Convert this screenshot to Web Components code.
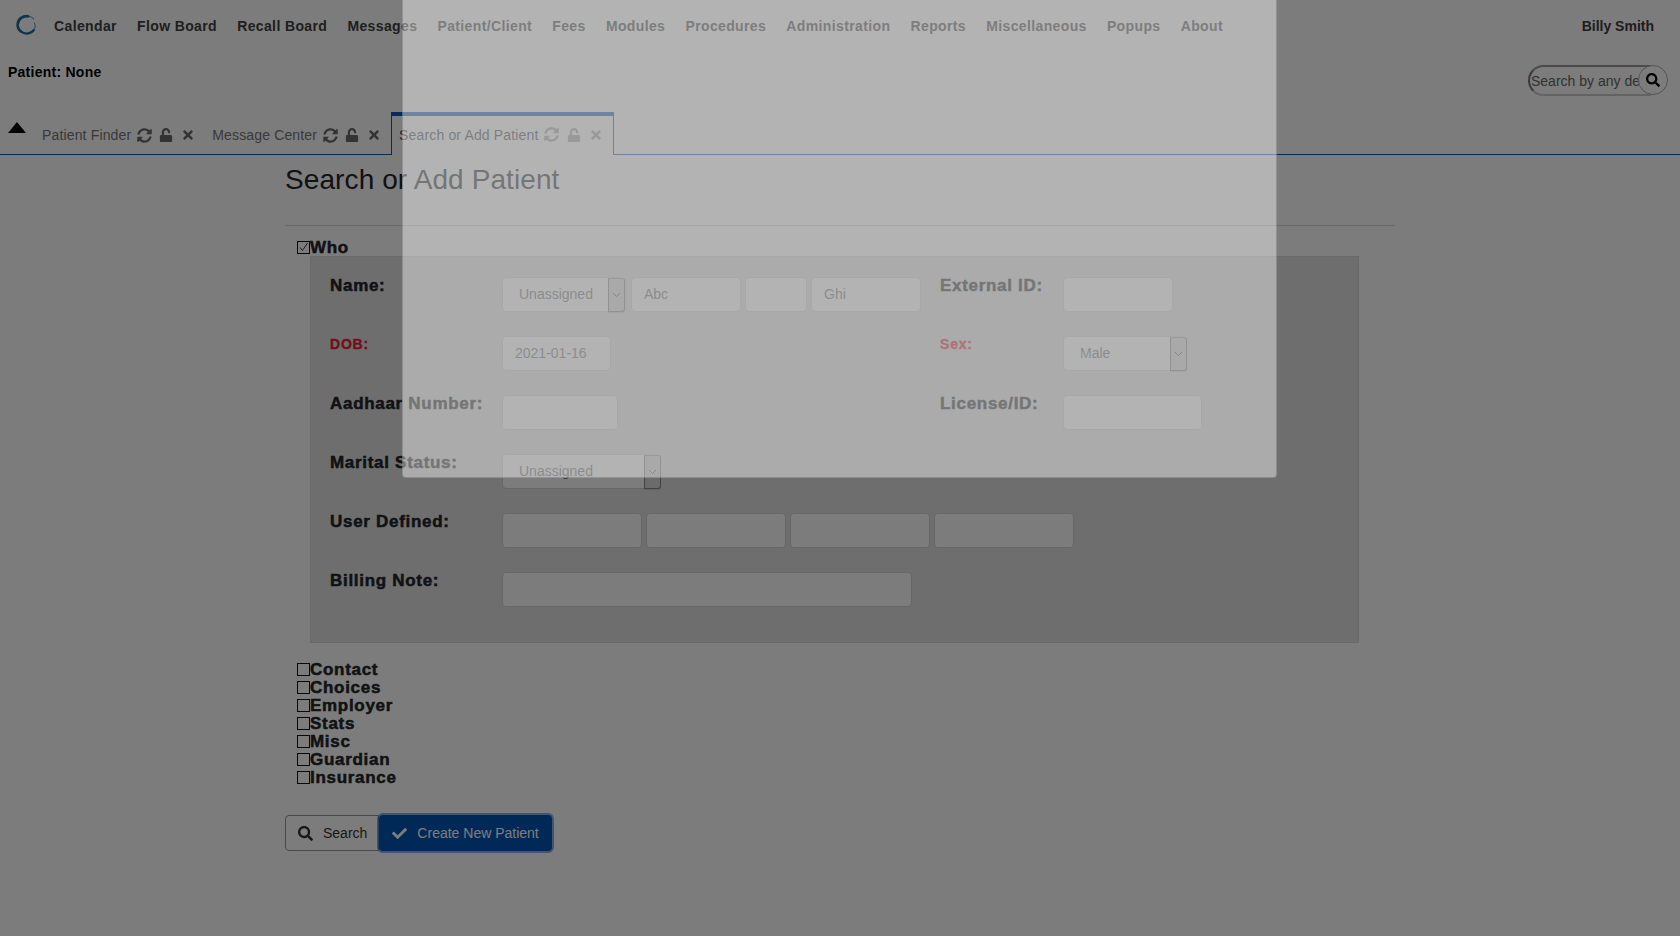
<!DOCTYPE html>
<html lang="en"><head><meta charset="utf-8"><title>Search or Add Patient</title>
<style>
html,body{margin:0;height:936px;overflow:hidden;background:#fff;font-family:"Liberation Sans",Arial,sans-serif;}
</style></head><body>
<x-app></x-app>
<script>
const P={
search:['0 0 512 512','M505 442.7L405.3 343c-4.5-4.5-10.6-7-17-7H372c27.6-35.3 44-79.7 44-128C416 93.1 322.9 0 208 0S0 93.1 0 208s93.1 208 208 208c48.3 0 92.7-16.4 128-44v16.3c0 6.4 2.5 12.5 7 17l99.7 99.7c9.4 9.4 24.6 9.4 33.9 0l28.3-28.3c9.4-9.4 9.4-24.6.1-34zM208 336c-70.7 0-128-57.2-128-128 0-70.7 57.2-128 128-128 70.7 0 128 57.2 128 128 0 70.7-57.2 128-128 128z'],
check:['0 0 512 512','M173.898 439.404l-166.4-166.4c-9.997-9.997-9.997-26.206 0-36.204l36.203-36.204c9.997-9.998 26.207-9.998 36.204 0L192 312.69 432.095 72.596c9.997-9.997 26.207-9.997 36.204 0l36.203 36.204c9.997 9.997 9.997 26.206 0 36.204l-294.4 294.401c-9.998 9.997-26.207 9.997-36.204-.001z'],
times:['0 0 352 512','M242.72 256l100.07-100.07c12.28-12.28 12.28-32.19 0-44.48l-22.24-22.24c-12.28-12.28-32.19-12.28-44.48 0L176 189.28 75.93 89.21c-12.28-12.28-32.19-12.28-44.48 0L9.21 111.45c-12.28 12.28-12.28 32.19 0 44.48L109.28 256 9.21 356.07c-12.28 12.28-12.28 32.19 0 44.48l22.24 22.24c12.28 12.28 32.2 12.28 44.48 0L176 322.72l100.07 100.07c12.28 12.28 32.2 12.28 44.48 0l22.24-22.24c12.28-12.28 12.28-32.19 0-44.48L242.72 256z'],
unlock:['0 0 448 512','M400 256H152V152.9c0-39.6 31.7-72.5 71.3-72.9 40-.4 72.7 32.1 72.7 72v16c0 13.3 10.7 24 24 24h32c13.3 0 24-10.7 24-24v-16C376 68 307.5-.3 223.5 0 139.5.3 72 69.5 72 153.5V256H48c-26.5 0-48 21.5-48 48v160c0 26.5 21.5 48 48 48h352c26.5 0 48-21.5 48-48V304c0-26.5-21.5-48-48-48z'],
sync:['0 0 512 512','M370.72 133.28C339.458 104.008 298.888 87.962 255.848 88c-77.458.068-144.328 53.178-162.791 126.85-1.344 5.363-6.122 9.15-11.651 9.15H24.103c-7.498 0-13.194-6.807-11.807-14.176C33.933 94.924 134.813 8 256 8c66.448 0 126.791 26.136 171.315 68.685L463.03 40.97C478.149 25.851 504 36.559 504 57.941V192c0 13.255-10.745 24-24 24H345.941c-21.382 0-32.09-25.851-16.971-40.971l41.75-41.749zM32 296h134.059c21.382 0 32.09 25.851 16.971 40.971l-41.75 41.75c31.262 29.273 71.835 45.319 114.876 45.28 77.418-.07 144.315-53.144 162.787-126.849 1.344-5.363 6.122-9.15 11.651-9.15h57.304c7.498 0 13.194 6.807 11.807 14.176C478.067 417.076 377.187 504 256 504c-66.448 0-126.791-26.136-171.315-68.685L48.97 471.03C33.851 486.149 8 475.441 8 454.059V320c0-13.255 10.745-24 24-24z']};
const ico=(n,s)=>`<svg width="${s}" height="${s}" viewBox="${P[n][0]}" fill="currentColor" aria-hidden="true"><path d="${P[n][1]}"/></svg>`;
function def(name,css,html){customElements.define(name,class extends HTMLElement{
  constructor(){super();this.attachShadow({mode:'open'});}
  connectedCallback(){this.shadowRoot.innerHTML=`<style>${css}</style>`+(typeof html==='function'?html(this):html);}
});}

def('x-nav',`:host{display:flex;height:52px;align-items:center;padding:0 26px 0 15px;font-size:14px;font-weight:700;letter-spacing:.37px;color:#404040}
svg{display:block;margin-right:17px;margin-top:-2px}
.items{display:flex;gap:20.2px;flex:1}
.items span{white-space:nowrap}
.u{color:#3c3c3c;letter-spacing:0}`,()=>`<svg width="22" height="22" viewBox="0 0 22 22" fill="none"><path d="M19 5.2A9 9 0 0 0 14 2.3" stroke="#2f86b5" stroke-width="1"/><path d="M14 2.4C8 1 2.8 5 2.6 10.6 2.5 13.5 3.8 16 6 17.6" stroke="#1f6f9e" stroke-width="2.6"/><path d="M5.5 17.2c3.6 3 8.3 2.7 11.2.8 1.2-.8 2-1.6 2.6-2.6" stroke="#1c6a98" stroke-width="2.4"/><path d="M19.3 15.4c1.1-2.1 1.1-4.7 0-6.7" stroke="#3a8fc0" stroke-width="1"/></svg>
<div class="items">${['Calendar','Flow Board','Recall Board','Messages','Patient/Client','Fees','Modules','Procedures','Administration','Reports','Miscellaneous','Popups','About'].map(t=>`<span>${t}</span>`).join('')}</div><span class="u">Billy Smith</span>`);

def('x-patient-bar',`:host{display:flex;height:60px;justify-content:space-between;align-items:flex-start;padding:0 12px 0 8px}
.p{font-size:14px;font-weight:700;color:#000;margin-top:12px;line-height:16px;letter-spacing:.25px}
.s{display:flex;margin-top:13px;align-items:center;position:relative;width:140px}
.box{width:120px;height:27px;border:2px solid #aaa;border-right:0;border-color:#999 #ccc #ccc #777;border-radius:16px 0 0 16px;overflow:hidden;white-space:nowrap;font-size:14px;line-height:29px;color:#666;padding-left:1px;background:#fff}
.b{position:absolute;left:110px;top:0;width:28px;height:28px;border:1px solid #aaa;border-radius:50%;background:#fff;display:flex;align-items:center;justify-content:center;color:#000}`,
`<div class="p">Patient: None</div><div class="s"><div class="box">Search by any demographics</div><div class="b">${ico('search',14)}</div></div>`);

def('x-tab',`:host{display:flex;align-items:center;gap:8px;padding:0 9px;height:36px;font-size:14px;letter-spacing:.15px;color:#767676;margin:5px -1px 0 0;box-sizing:border-box}
:host([active]){border:1px solid #0a5cb8;border-top-width:4px;border-bottom:0;background:#fff;height:43px;margin:0 0 -1px 2px;padding:0 10px 2px 7px;position:relative;color:#3c4248}
.t{margin-right:-2px;white-space:nowrap}:host([active]) .t{margin-right:-1.5px}
.i{width:14px;display:flex;justify-content:center;color:#6a6a6a}:host([active]) .i{color:#a2a2a2}svg{display:block;flex:none}`,
h=>`<span class="t">${h.getAttribute('label')}</span><span class="i">${ico('sync',15)}</span><span class="i">${ico('unlock',14)}</span><span class="i">${ico('times',14)}</span>`);

def('x-tabs',`:host{display:flex;border-bottom:1px solid #0a5cb8;height:42px;padding-left:8px}
.tri{width:0;height:0;border:9.5px solid transparent;border-top:0;border-bottom:11px solid #000;margin:10px 7px 0 0}`,
`<div class="tri"></div><slot></slot>`);

def('x-field',`:host{display:block;box-sizing:border-box;height:35px;background:#fff;border:1px solid #d0d3d8;border-radius:4px;font-size:14px;line-height:33px;color:#6c757d;padding-left:12px;white-space:nowrap;overflow:hidden}`,`<slot></slot>`);

def('x-select',`:host{display:flex;box-sizing:border-box;height:35px;background:#fff;border:1px solid #d0d3d8;border-radius:4px;font-size:14px;line-height:33px;color:#6c757d}
.v{flex:1;padding-left:16px;white-space:nowrap;overflow:hidden}
.a{width:15px;flex:none;background:#dcdcdc;border:1px solid #8a8a8a;border-top-color:#aaa;border-radius:0 3px 3px 0;display:flex;align-items:center;justify-content:center;margin:0 -1px -1px 0;box-shadow:0 1px 1px rgba(0,0,0,.12)}`,
`<div class="v"><slot></slot></div><div class="a"><svg width="9" height="6" viewBox="0 0 9 6" fill="none"><path d="M1 1l3.5 3.5L8 1" stroke="#666" stroke-width="1"/></svg></div>`);

def('x-check',`:host{display:flex;align-items:center;height:18px;font-size:17px;line-height:18px;font-weight:700;letter-spacing:.7px;-webkit-text-stroke:.5px currentColor;color:#212529;white-space:nowrap}
.c{width:11px;height:11px;border:1px solid #111;flex:none;margin-top:-2px;display:flex;-webkit-text-stroke:0}svg{display:block}`,
h=>`<span class="c">${h.hasAttribute('checked')?'<svg width="11" height="11" viewBox="0 0 11 11" fill="none"><path d="M2 5.5l2.5 3L9.5 1" stroke="#444" stroke-width="1"/></svg>':''}</span><slot></slot>`);

def('x-label',`:host{display:block;font-size:17px;font-weight:700;letter-spacing:.7px;-webkit-text-stroke:.5px currentColor;color:#212529;line-height:18px;white-space:nowrap}
:host([req]){color:#ee1c34;font-size:14px;letter-spacing:.8px;-webkit-text-stroke:.4px currentColor;margin-top:-1px}`,`<slot></slot>`);

def('x-form',`:host{display:block;box-sizing:border-box;width:1049px;height:387px;background:#e2e3e5;border:1px solid #d6d8db;padding:20px 0 0 19px;margin-left:25px}
.g{display:grid;grid-template-columns:172px 438px 123px;grid-auto-rows:35px;row-gap:24px}
.r{display:flex}`,`<div class="g">
<x-label>Name:</x-label><div class="r"><x-select style="width:123px">Unassigned</x-select><x-field style="width:110px;margin-left:6px">Abc</x-field><x-field style="width:62px;margin-left:4px"></x-field><x-field style="width:110px;margin-left:4px">Ghi</x-field></div><x-label>External ID:</x-label><x-field style="width:110px"></x-field>
<x-label req>DOB:</x-label><div class="r"><x-field style="width:109px">2021-01-16</x-field></div><x-label req>Sex:</x-label><x-select style="width:124px">Male</x-select>
<x-label>Aadhaar Number:</x-label><div class="r"><x-field style="width:116px"></x-field></div><x-label>License/ID:</x-label><x-field style="width:139px"></x-field>
<x-label>Marital Status:</x-label><div class="r"><x-select style="width:159px">Unassigned</x-select></div><span></span><span></span>
<x-label>User Defined:</x-label><div class="r" style="gap:4px;grid-column:2/5"><x-field style="width:140px"></x-field><x-field style="width:140px"></x-field><x-field style="width:140px"></x-field><x-field style="width:140px"></x-field></div>
<x-label>Billing Note:</x-label><div class="r" style="grid-column:2/5"><x-field style="width:410px"></x-field></div>
</div>`);

def('x-btn',`:host{display:flex;align-items:center;box-sizing:border-box;height:36px;font-size:14px;gap:10px;padding:0 11px 0 12px;border:1px solid #999;border-radius:4px 0 0 4px;color:#333;background:#fff}
:host([primary]){background:#0056b3;border:0;border-radius:4px;color:#fff;box-shadow:0 0 0 2px rgba(38,110,190,.55);padding:0 13px 0 13px;margin-left:0;position:relative}svg{display:block}`,h=>`${ico(h.getAttribute('icon'),15)}<slot></slot>`);

def('x-page',`:host{display:block;padding-left:285px;width:1110px}
h2{font-size:28px;font-weight:400;margin:0;line-height:34px;padding-top:8px;color:#212529;letter-spacing:.1px}
hr{border:0;border-top:1px solid #d8d8d8;margin:28px 0 13px}
.list{margin:18px 0 0 12px}.who{margin:0 0 -1px 12px}
.btns{display:flex;margin-top:28px}`,`<h2>Search or Add Patient</h2><hr>
<x-check checked class="who">Who</x-check><x-form></x-form>
<div class="list"><x-check>Contact</x-check><x-check>Choices</x-check><x-check>Employer</x-check><x-check>Stats</x-check><x-check>Misc</x-check><x-check>Guardian</x-check><x-check>Insurance</x-check></div>
<div class="btns"><x-btn icon="search">Search</x-btn><x-btn icon="check" primary>Create New Patient</x-btn></div>`);

def('x-overlay',`:host{position:fixed;inset:0;background:rgba(0,0,0,.514);display:block}
.m{position:absolute;left:402px;top:0;width:875px;height:478px;box-sizing:border-box;background:rgba(255,255,255,.42);border:1px solid rgba(0,0,0,.18);border-top:0;border-radius:0 0 4px 4px}`,`<div class="m"></div>`);

def('x-app',`:host{display:block;height:936px;position:relative;overflow:hidden}`,`<x-nav></x-nav><x-patient-bar></x-patient-bar>
<x-tabs><x-tab label="Patient Finder"></x-tab><x-tab label="Message Center"></x-tab><x-tab label="Search or Add Patient" active></x-tab></x-tabs>
<x-page></x-page><x-overlay></x-overlay>`);
</script></body></html>
